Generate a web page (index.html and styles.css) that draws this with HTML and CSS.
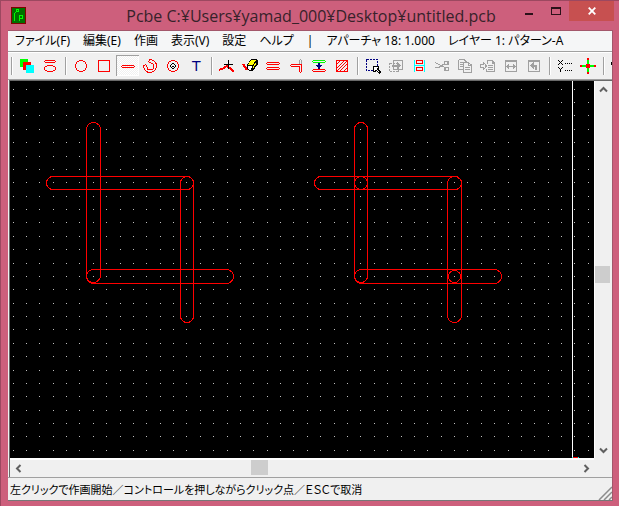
FILE: index.html
```html
<!DOCTYPE html>
<html lang="ja">
<head>
<meta charset="utf-8">
<title>Pcbe</title>
<link rel="stylesheet" href="styles.css">
</head>
<body>
<div class="window">
  <header class="titlebar">
    <svg class="app-icon" width="15" height="17" viewBox="0 0 15 17" shape-rendering="crispEdges">
      <rect x="0" y="0" width="15" height="17" fill="#800000"/>
      <rect x="1" y="1" width="13" height="15" fill="#007000"/>
      <path d="M3.500 14V6.500L5.500 4.500M5.500 2.500h2v2h-2zM8.500 14V8.500h3v3h-3" fill="none" stroke="#00ff00"/>
    </svg>
    <h1 class="title">Pcbe C:¥Users¥yamad_000¥Desktop¥untitled.pcb</h1>
    <div class="window-buttons">
      <button class="window-button" aria-label="最小化"><svg width="10" height="10" viewBox="0 0 10 10"><path d="M1 7h8v2H1z" fill="#2b1119"/></svg></button>
      <button class="window-button" aria-label="最大化"><svg width="10" height="8" viewBox="0 0 10 8" shape-rendering="crispEdges"><path d="M0 0h10v8H0zM1 2v5h8V2z" fill="#2b1119" fill-rule="evenodd"/></svg></button>
      <button class="window-button close" aria-label="閉じる"><svg width="8" height="8" viewBox="0 0 8 8"><path d="M.7.7l6.600 6.600M7.300.7L.7 7.300" stroke="#fff" stroke-width="1.800"/></svg></button>
    </div>
  </header>
  <main class="client">
    <nav class="menubar">
      <button class="menu-item">ファイル(F)</button>
      <button class="menu-item">編集(E)</button>
      <button class="menu-item">作画</button>
      <button class="menu-item">表示(V)</button>
      <button class="menu-item">設定</button>
      <button class="menu-item">ヘルプ</button>
      <span class="menu-item">|</span>
      <button class="menu-item">アパーチャ 18: 1.000</button>
      <button class="menu-item">レイヤー 1: パターン-A</button>
    </nav>
    <div class="toolbar" id="toolbar" role="toolbar"></div>
    <section class="workspace">
      <svg class="board" id="board" shape-rendering="crispEdges" role="img" aria-label="基板"></svg>
      <div class="scroll vertical">
        <button class="arrow" aria-label="上"><svg width="9" height="7" viewBox="0 0 9 7"><path d="M1 5.500L4.500 2L8 5.500" class="chevron"/></svg></button>
        <div class="track"><div class="thumb"></div></div>
        <button class="arrow" aria-label="下"><svg width="9" height="7" viewBox="0 0 9 7"><path d="M1 1.500L4.500 5L8 1.500" class="chevron"/></svg></button>
      </div>
      <div class="scroll horizontal">
        <button class="arrow" aria-label="左"><svg width="7" height="9" viewBox="0 0 7 9"><path d="M5.500 1L2 4.500L5.500 8" class="chevron"/></svg></button>
        <div class="track"><div class="thumb"></div></div>
        <button class="arrow" aria-label="右"><svg width="7" height="9" viewBox="0 0 7 9"><path d="M1.500 1L5 4.500L1.500 8" class="chevron"/></svg></button>
      </div>
    </section>
    <footer class="statusbar">
      <span>左クリックで作画開始／コントロールを押しながらクリック点／ＥＳＣで取消</span>
      <svg class="grip" width="14" height="14" viewBox="0 0 14 14"><path d="M1 14L14 1M6 14L14 6M11 14L14 11" stroke="#8c8c8c" stroke-width="1.500"/></svg>
    </footer>
  </main>
</div>
<script src="app.js"></script>
</body>
</html>
```

FILE: styles.css
```css
* { box-sizing: border-box; }

body {
  margin: 0;
  font-family: "Noto Sans", "Noto Sans CJK JP", sans-serif;
  font-size: 12px;
  color: #000;
}

button {
  margin: 0;
  padding: 0;
  border: 0;
  background: none;
  color: inherit;
  font: inherit;
  font-feature-settings: inherit;
}

svg { display: block; flex: none; }

.window {
  display: flex;
  flex-direction: column;
  height: 100vh;
  padding: 0 6px 5px 7px;
  background: #cd5f7c;
  border: 1px solid #9c4860;
  border-bottom: 0;
  border-right: 0;
}

.titlebar {
  display: grid;
  flex: none;
  grid-template-columns: 1fr auto 1fr;
  align-items: start;
  height: 29px;
  margin-right: -1px;
}

.app-icon { margin: 6px 0 0 3px; }

.title {
  margin: 5px 0 0;
  font-family: "Open Sans", "Noto Sans", sans-serif;
  font-size: 16px;
  font-weight: 400;
  line-height: 21px;
  color: #37222a;
  white-space: nowrap;
}

.window-buttons { display: flex; justify-content: flex-end; }

.window-button {
  display: grid;
  flex: none;
  place-items: center;
  width: 27px;
  height: 20px;
}

.window-button.close { width: 45px; background: #c75050; }

.client {
  display: flex;
  flex: 1;
  flex-direction: column;
  min-height: 0;
  background: #f0f0f0;
  border: 1px solid #a3576b;
  border-left: 0;
  border-bottom-color: #777;
}

.menubar {
  display: flex;
  flex: none;
  gap: 13px;
  height: 20px;
  padding-left: 7px;
  background: #f5f6f7;
  font-feature-settings: "palt";
  line-height: 20px;
  white-space: nowrap;
}

.toolbar {
  display: flex;
  flex: none;
  align-items: flex-start;
  height: 29px;
  padding-top: 3px;
  overflow: hidden;
  border-top: 1px solid #a0a0a0;
  border-bottom: 1px solid #a0a0a0;
  box-shadow: inset 0 1px #fff;
}

.tool { flex: none; width: 23px; height: 21px; }
.tool.active {
  background: repeating-conic-gradient(#fff 0 25%, #f0f0f0 0 50%) 0 0 / 2px 2px;
  box-shadow: inset 1px 1px #a0a0a0, inset -1px -1px #fff;
}
.tool text { font-family: "DejaVu Sans", sans-serif; }

.separator {
  flex: none;
  width: 8px;
  height: 21px;
  background: linear-gradient(90deg, transparent 3px, #a0a0a0 3px 4px, #fff 4px 5px, transparent 5px) 0 2px / 8px 18px no-repeat;
}

.workspace {
  display: grid;
  flex: 1;
  grid-template-columns: 1fr 18px;
  grid-template-rows: 1fr 19px;
  min-height: 0;
  margin-left: 1px;
  border-top: 1px solid #696969;
  border-left: 1px solid #696969;
}

.board { width: 100%; height: 100%; min-height: 0; background: #000; }

.scroll { display: flex; }
.vertical { flex-direction: column; border-left: 1px solid #fff; }
.horizontal { border-top: 2px solid #fff; }
.arrow { display: grid; flex: none; place-items: center; width: 16px; height: 16px; }
.chevron { fill: none; stroke: #606060; stroke-width: 2; }
.track { display: flex; flex: 1; }
.vertical .track { flex-direction: column; }
.thumb { background: #cdcdcd; }
.vertical .thumb { width: 15px; height: 17px; margin-top: 169px; }
.horizontal .thumb { width: 17px; height: 15px; margin-left: 225px; }

.statusbar {
  display: flex;
  flex: none;
  align-items: flex-end;
  justify-content: space-between;
  height: 23px;
  padding-left: 2px;
  border-top: 1px solid #a0a0a0;
  font-feature-settings: "palt";
  font-size: 11px;
  line-height: 20px;
  white-space: nowrap;
}
```

FILE: app.js
```js
const stroke = (color, d, width = 1) =>
  `<path d="${d}" fill="none" stroke="${color}" stroke-width="${width}"/>`;
const fill = (color, d) => `<path d="${d}" fill="${color}"/>`;

const RED = "#ff0000";
const GRAY = "#a0a0a0";
const NAVY = "#000080";

const tools = [
  null,
  ["レイヤー", fill("#00ff00", "M4 4h8v8H4z") + fill(RED, "M7 7h8v8H7z") + fill("#00ffff", "M10 10h8v8h-8z")],
  ["アパーチャ", stroke(RED, "M6 5.500H16M5 6.500H6M16 6.500H17M6 7.500H16M8 10.500H14M8 16.500H14M6 11.500H8M14 11.500H16M6 15.500H8M14 15.500H16M5.500 12V15M16.500 12V15")],
  null,
  ["円", stroke(RED, "M9 5.500H13M9 16.500H13M5.500 9V13M16.500 9V13M7 6.500H9M13 6.500H15M7 15.500H9M13 15.500H15M6.500 7V9M15.500 7V9M6.500 13V15M15.500 13V15")],
  ["四角", stroke(RED, "M5.500 5.500h11v11h-11z")],
  ["線", stroke(RED, "M6 10.500H18M6 12.500H18M5 11.500H6M18 11.500H19"), true],
  ["円弧", stroke(RED, "M11.500 4.500A6.500 6.500 0 1 1 4.500 11.500A1.700 1.700 0 0 1 8 11.500A3.500 3.500 0 1 0 11.500 8A1.700 1.700 0 0 1 11.500 4.500")],
  ["ドーナツ", stroke(RED, "M9 5.500H13M9 16.500H13M5.500 9V13M16.500 9V13M7 6.500H9M13 6.500H15M7 15.500H9M13 15.500H15M6.500 7V9M15.500 7V9M6.500 13V15M15.500 13V15") + stroke("#000", "M10 8.500H12M10 13.500H12M8.500 10V12M13.500 10V12M9 9.500H10M12 9.500H13M9 12.500H10M12 12.500H13M10 11H12")],
  ["文字", `<text x="7" y="16" font-size="14" fill="${NAVY}">T</text>`],
  null,
  ["折れ線", stroke(RED, "M3 15L7 13.500L11 11L18 16.500", 2) + stroke("#000", "M12.500 5V14M8 9.500H17")],
  ["消去", stroke(RED, "M4 9L8 15", 2) + stroke(RED, "M8 15L12 11") + fill("#000", "M12 4H18L19 6V9L14 16H10L8 13V10z") + fill("#ffff00", "M12 5H17L14 10H9z") + fill("#fff", "M9 11H13V12L12 15H10L9 13z") + fill("#ffff00", "M14 12L17 7V9L14 14z")],
  ["平行線", stroke(RED, "M5 7.500H17M5 9.500H17M4 8.500H5M17 8.500H18M5 12.500H17M5 14.500H17M4 13.500H5M17 13.500H18")],
  ["角", stroke(GRAY, "M14.500 9V5M16.500 10V5M15 4.500H16") + stroke(RED, "M6 9.500H16M6 11.500H15M5 10.500H6M14.500 11V17M16.500 9V17M15 17.500H16")],
  ["間隔", stroke("#00ff00", "M5 5.500H17M5 7.500H17M4 6.500H5M17 6.500H18") + stroke(RED, "M5 14.500H17M5 16.500H17M4 15.500H5M17 15.500H18") + stroke(NAVY, "M11 8V14", 2) + fill(NAVY, "M8 10H14V11H13V12H9V11H8z")],
  ["塗り", stroke(RED, "M5.500 5.500h11v11h-11zM6 9L9 6M6 13L13 6M6 16L16 6M9 16L16 9M13 16L16 13")],
  null,
  ["選択", `<path d="M4.500 4.500h11v11h-11z" fill="none" stroke="${NAVY}" stroke-dasharray="2 1"/>` + fill("#000", "M11 11h6v2l-1 1l3 3l-2 2l-3-3l-1 1h-2z") + fill("#fff", "M12 12h4l-1 2l2 3l-3-2l-2 1z")],
  ["移動", `<path d="M4.500 8.500h9v8h-9z" fill="none" stroke="${GRAY}" stroke-dasharray="2 1"/>` + stroke(GRAY, "M8.500 5.500h9v9h-9z") + stroke(GRAY, "M7 10.500H14", 2) + fill(GRAY, "M12 7L16 10.500L12 14z")],
  ["整列", stroke("#00ffff", "M6.500 5V17M16.500 5V17M7 10.500H16") + stroke(RED, "M8.500 5.500H14.500V8.500H8.500zM8.500 12.500H14.500V15.500H8.500z")],
  ["切り取り", stroke(GRAY, "M4 7.500L14 12.500M4 12.500H8L13 9M14 6.500H17V9.500H13.500zM14 12.500H17.500V15.500H14z", 1.300)],
  ["コピー", stroke(GRAY, "M4.500 4.500H10L12.500 7M4.500 4.500V14.500H9M6 7.500H9M6 9.500H9M6 11.500H9M9.500 7.500H14.500L17.500 10V17.500H9.500zM14 8V10.500H17M11 12.500H16M11 14.500H16")],
  ["貼り付け", stroke(GRAY, "M3.500 9.500H6.500V7.500L9.500 11L6.500 14.500V12.500H3.500zM10 5.500H15.500L17.500 8V16.500H9.500V14M10.500 9V5M15 6V8.500H17M11 10.500H16M11 12.500H16M11 14.500H16")],
  ["反転", stroke(GRAY, "M5.500 5.500h11v11h-11zM5 6.500H17M7 11.500H15") + fill(GRAY, "M6 11.500L9 8V15zM16 11.500L13 8V15z")],
  ["回転", stroke(GRAY, "M5.500 5.500h11v11h-11zM5 6.500H17") + stroke(GRAY, "M9 10.500H12.500V15", 2) + fill(GRAY, "M7 10.500L11 7V14z")],
  null,
  ["座標", stroke("#000", "M4 5L9 10M9 5L4 10M4 12L6.500 14.500L9 12M6.500 14V17") + stroke("#000", "M11 8.500h1m1 0h1m1 0h1m1 0h1M11 15.500h1m1 0h1m1 0h1m1 0h1")],
  ["原点", fill("#00ff00", "M10 4h2v15h-2zM4 10h15v2H4z") + fill(RED, "M10 3h2v2h-2zM10 17h2v2h-2zM3 10h2v2H3zM17 10h2v2h-2zM9 9h4v4H9z")],
  null,
  ["拡大", stroke("#000", "M5 5.500H9M4.500 6V8M3.500 7V10M4.500 10V12M5 12.500H9M9.500 6V12M9 12L14 17")],
];

document.getElementById("toolbar").innerHTML = tools.map((tool) => {
  if (!tool) return '<span class="separator"></span>';
  const [label, art, active] = tool;
  return `<button class="tool${active ? " active" : ""}" aria-label="${label}">` +
    `<svg width="22" height="21" viewBox="0 0 22 21" shape-rendering="crispEdges">${art}</svg></button>`;
}).join("");

const PITCH = 13.376;
const board = document.getElementById("board");
const { width, height } = board.getBoundingClientRect();

let dots = "";
for (let y = 8.2; y < height; y += PITCH) {
  for (let x = 3.1; x < width; x += PITCH) {
    dots += `M${Math.floor(x)} ${Math.floor(y)}h1v1h-1z`;
  }
}

/* Trace outlines: left, top, width, height of each rounded line. */
const traces = [
  [76, 41, 14, 160], [36, 95, 147, 13], [170, 95, 13, 146], [76, 188, 147, 14],
  [344, 41, 13, 160], [304, 95, 147, 13], [437, 95, 14, 146], [344, 188, 147, 14],
  [344, 95, 13, 13], [438, 189, 12, 12],
];
const outlines = traces.map(([x, y, w, h]) =>
  `<rect x="${x + 0.5}" y="${y + 0.5}" width="${w}" height="${h}" rx="${Math.min(w, h) / 2}" fill="none" stroke="${RED}"/>`
).join("");

board.innerHTML = fill("#c0c0c0", dots) + outlines +
  fill("#fff", `M562 0h1v${height}h-1z`) +
  fill("#00ffff", `M562 ${height - 1}h1v1h-1zM568 ${height - 1}h1v1h-1z`) +
  fill(RED, `M563 ${height - 1}h5v1h-5z`);
```
